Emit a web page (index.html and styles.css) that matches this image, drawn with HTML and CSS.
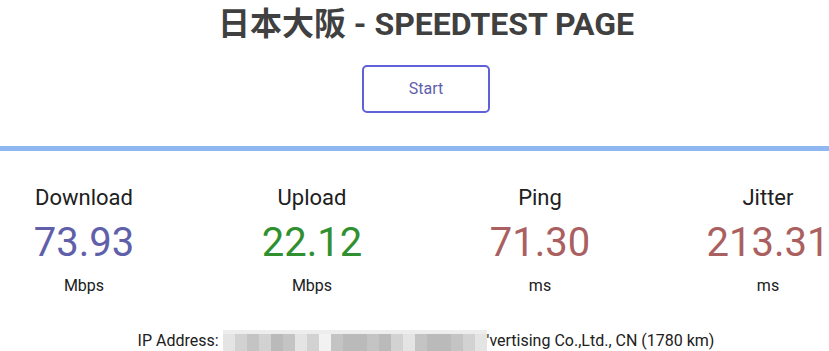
FILE: index.html
```html
<!DOCTYPE html>
<html lang="zh">

<head>
    <meta charset="UTF-8">
    <meta name="viewport" content="width=device-width, initial-scale=1.0">
    <title>日本大阪 - SPEEDTEST PAGE</title>
    <link rel="stylesheet" href="styles.css">
</head>

<body>
    <div class="page">
        <h1>日本大阪 - SPEEDTEST PAGE</h1>
        <div class="btn-start">Start</div>
        <div class="divider"></div>
        <div class="test-group">
            <div class="test-area">
                <div class="test-name">Download</div>
                <div class="meter-text dl">73.93</div>
                <div class="unit">Mbps</div>
            </div>
            <div class="test-area">
                <div class="test-name">Upload</div>
                <div class="meter-text ul">22.12</div>
                <div class="unit">Mbps</div>
            </div>
            <div class="test-area">
                <div class="test-name">Ping</div>
                <div class="meter-text ping">71.30</div>
                <div class="unit">ms</div>
            </div>
            <div class="test-area">
                <div class="test-name">Jitter</div>
                <div class="meter-text ping">213.31</div>
                <div class="unit">ms</div>
            </div>
        </div>
        <div class="ip-area">
            IP Address: <span class="mosaic"><i class="m4"></i><i class="m1"></i><i class="m2"></i><i class="m1"></i><i class="m3"></i><i class="m2"></i><i class="m4"></i><i class="m1"></i><i class="m5"></i><i class="m2"></i><i class="m3"></i><i class="m3"></i><i class="m2"></i><i class="m3"></i><i class="m1"></i><i class="m4"></i><i class="m2"></i><i class="m3"></i><i class="m3"></i><i class="m2"></i><i class="m1"></i><i class="m4"></i></span>'vertising Co.,Ltd., CN (1780 km)
        </div>
    </div>
</body>

</html>
```

FILE: styles.css
```css
body {
    margin: 0;
    overflow: hidden;
    background-color: #FFFFFF;
    font-family: Roboto, "Noto Sans CJK SC", sans-serif;
    color: #202020;
}

.page {
    width: 852px;
    padding-top: 4px;
    text-align: center;
}

h1 {
    margin: 0;
    font-size: 32px;
    line-height: 40px;
    font-weight: bold;
    color: #404040;
}

.btn-start {
    display: block;
    margin: 21px auto 0;
    width: 128px;
    height: 48px;
    line-height: 44px;
    box-sizing: border-box;
    border: 2px solid #6060D8;
    border-radius: 5px;
    color: #6060AA;
    font-size: 16px;
}

.divider {
    margin-top: 33px;
    height: 5px;
    background-color: #8FB8F2;
}

.test-group {
    display: flex;
    margin: 34px -30px 0;
}

.test-area {
    flex: 1;
}

.test-name {
    font-size: 22px;
    line-height: 26px;
}

.meter-text {
    font-size: 40px;
    line-height: 46px;
    margin-top: 9px;
}

.dl {
    color: #6060AA;
}

.ul {
    color: #309030;
}

.ping {
    color: #AA6060;
}

.unit {
    margin-top: 10px;
    font-size: 16px;
    line-height: 20px;
}

.ip-area {
    margin-top: 34px;
    font-size: 16px;
    line-height: 20px;
    white-space: nowrap;
}

.mosaic {
    display: inline-flex;
    vertical-align: -6px;
    height: 18px;
    border-top: 4px solid #EDEDED;
}

.mosaic i {
    display: block;
    width: 12px;
    height: 18px;
}

.mosaic .m1 { background-color: #D2D2D2; }
.mosaic .m2 { background-color: #C4C4C4; }
.mosaic .m3 { background-color: #BABABA; }
.mosaic .m4 { background-color: #E4E4E4; }
.mosaic .m5 { background-color: #F2F2F2; }
```
